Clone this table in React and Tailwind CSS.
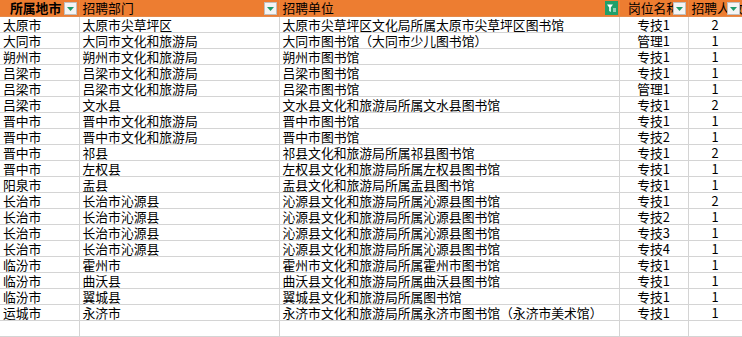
import React from 'react'

const ROWS = [
  ['太原市', '太原市尖草坪区', '太原市尖草坪区文化局所属太原市尖草坪区图书馆', '专技1', '2'],
  ['大同市', '大同市文化和旅游局', '大同市图书馆（大同市少儿图书馆）', '管理1', '1'],
  ['朔州市', '朔州市文化和旅游局', '朔州市图书馆', '专技1', '1'],
  ['吕梁市', '吕梁市文化和旅游局', '吕梁市图书馆', '专技1', '1'],
  ['吕梁市', '吕梁市文化和旅游局', '吕梁市图书馆', '管理1', '1'],
  ['吕梁市', '文水县', '文水县文化和旅游局所属文水县图书馆', '专技1', '2'],
  ['晋中市', '晋中市文化和旅游局', '晋中市图书馆', '专技1', '1'],
  ['晋中市', '晋中市文化和旅游局', '晋中市图书馆', '专技2', '1'],
  ['晋中市', '祁县', '祁县文化和旅游局所属祁县图书馆', '专技1', '2'],
  ['晋中市', '左权县', '左权县文化和旅游局所属左权县图书馆', '专技1', '1'],
  ['阳泉市', '盂县', '盂县文化和旅游局所属盂县图书馆', '专技1', '1'],
  ['长治市', '长治市沁源县', '沁源县文化和旅游局所属沁源县图书馆', '专技1', '2'],
  ['长治市', '长治市沁源县', '沁源县文化和旅游局所属沁源县图书馆', '专技2', '1'],
  ['长治市', '长治市沁源县', '沁源县文化和旅游局所属沁源县图书馆', '专技3', '1'],
  ['长治市', '长治市沁源县', '沁源县文化和旅游局所属沁源县图书馆', '专技4', '1'],
  ['临汾市', '霍州市', '霍州市文化和旅游局所属霍州市图书馆', '专技1', '1'],
  ['临汾市', '曲沃县', '曲沃县文化和旅游局所属曲沃县图书馆', '专技1', '1'],
  ['临汾市', '翼城县', '翼城县文化和旅游局所属图书馆', '专技1', '1'],
  ['运城市', '永济市', '永济市文化和旅游局所属永济市图书馆（永济市美术馆）', '专技1', '1'],
]

function DropBtn() {
  return (
    <span className="absolute right-[2px] top-[2px] flex h-[13px] w-[13px] items-center justify-center border border-[#bfbfbf] bg-[#f4f4f4]">
      <svg width="7" height="4" viewBox="0 0 7 4">
        <path d="M0 0h7L3.5 4z" fill="#1f9a6a" />
      </svg>
    </span>
  )
}

function FilterBtn() {
  return (
    <span className="absolute right-[1px] top-[1px] flex h-[14px] w-[13px] items-center justify-center bg-[#21a06a]">
      <svg width="9" height="9" viewBox="0 0 9 9">
        <path d="M0 0.5h6L3.8 3.5v4.5L2.2 7V3.5z" fill="#fff" />
        <path d="M6 5h3M6 7h3" stroke="#fff" strokeWidth="1" />
      </svg>
    </span>
  )
}

const cell = 'h-4 border-r border-b border-[#d4d4d4] px-[3px] overflow-hidden whitespace-nowrap leading-[15px]'
const head = 'relative h-4 border-r border-b border-[#e58a4a] px-[3px] overflow-hidden whitespace-nowrap leading-[15px] bg-[#ed7d31]'

export default function App() {
  return (
    <div className="h-[337px] w-[742px] overflow-hidden bg-white text-[12.8px] text-black" style={{ fontFamily: '"Noto Sans CJK SC", "Liberation Serif", serif' }}>
      <table className="w-[742px] table-fixed border-collapse">
        <colgroup>
          <col className="w-[79px]" />
          <col className="w-[200px]" />
          <col className="w-[340px]" />
          <col className="w-[69px]" />
          <col className="w-[54px]" />
        </colgroup>
        <thead>
          <tr>
            <th className={`${head} pl-[10px] text-left font-bold`}>所属地市<DropBtn /></th>
            <th className={`${head} text-left font-normal`}>招聘部门<DropBtn /></th>
            <th className={`${head} text-left font-normal`}>招聘单位<FilterBtn /></th>
            <th className={`${head} text-center font-normal`}>岗位名称<DropBtn /></th>
            <th className={`${head} text-center font-normal`}>招聘人数<DropBtn /></th>
          </tr>
        </thead>
        <tbody>
          {ROWS.map((r, i) => (
            <tr key={i}>
              <td className={cell}>{r[0]}</td>
              <td className={cell}>{r[1]}</td>
              <td className={cell}>{r[2]}</td>
              <td className={`${cell} text-center`}>{r[3]}</td>
              <td className={`${cell} text-center`}>{r[4]}</td>
            </tr>
          ))}
          {[0, 1].map((k) => (
            <tr key={`e${k}`}>
              <td className={cell}></td>
              <td className={cell}></td>
              <td className={cell}></td>
              <td className={cell}></td>
              <td className={cell}></td>
            </tr>
          ))}
        </tbody>
      </table>
    </div>
  )
}
